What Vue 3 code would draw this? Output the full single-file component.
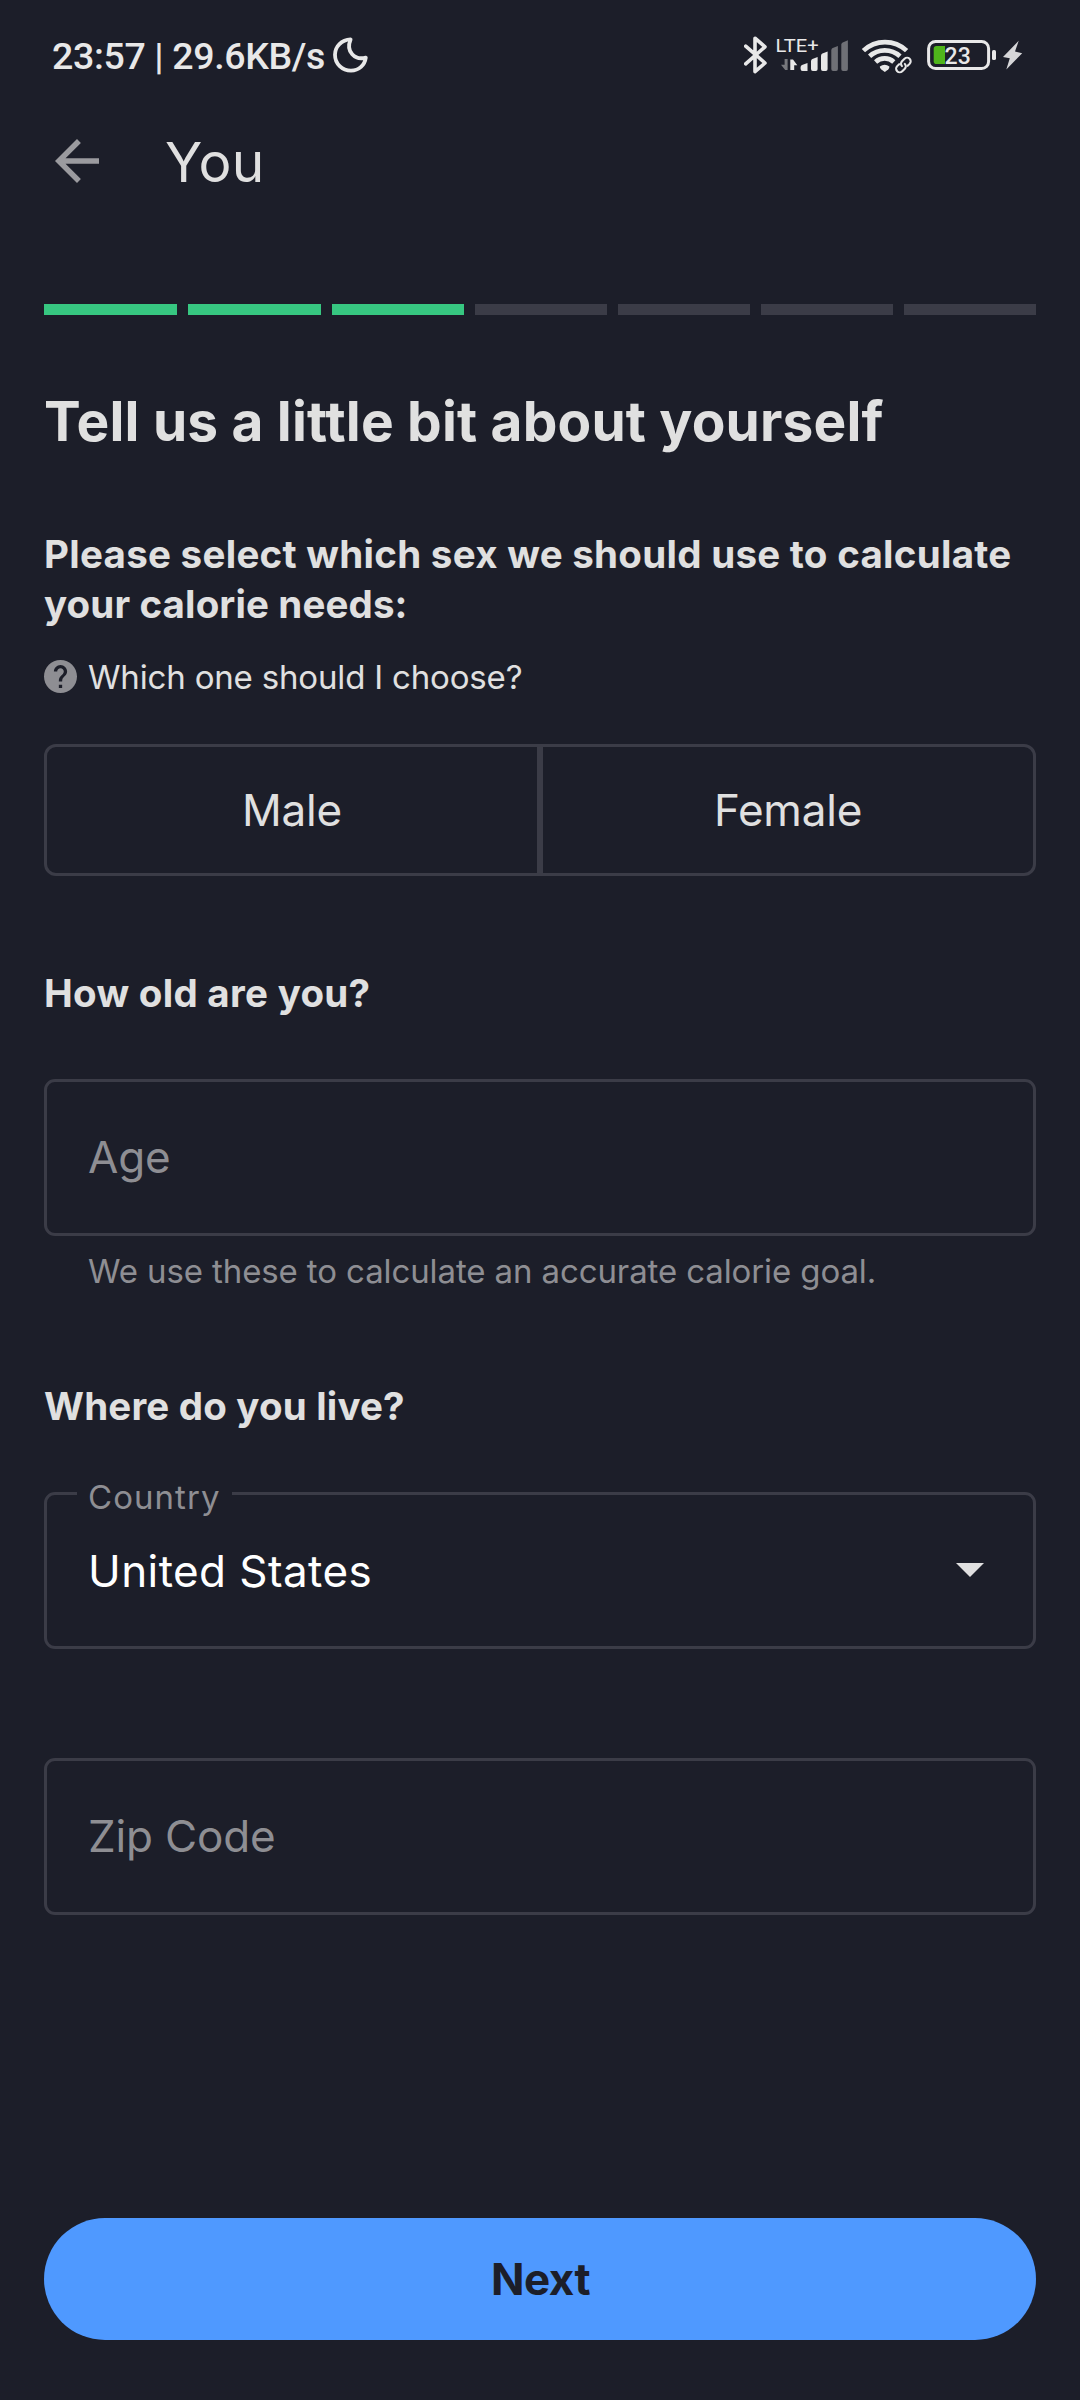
<script setup>
import { ref } from 'vue'

const steps = 7
const completed = 3
const sexes = ['Male', 'Female']
const country = ref('United States')
</script>

<template>
  <main class="screen">
    <header class="status">
      <div class="status-left">
        <span class="clock">23:57 | 29.6KB/s</span>
        <svg class="moon" width="36" height="38" viewBox="0 0 36 38">
          <path
            d="M17.6 2.4C8.6 2.8 2 9.4 2 17.8C2 27 9.2 33.6 18 33.6C26 33.6 31.8 28.2 32.8 20.6C22 23.6 12.4 14.6 17.6 2.4Z"
            fill="none" stroke="#e8e8e8" stroke-width="3.8" stroke-linejoin="round"
          />
        </svg>
      </div>
      <div class="status-right">
        <svg class="bluetooth" width="24" height="40" viewBox="744 36 24 40">
          <path
            d="M745.7 46.2L765 63L755 71.6V38.2L765 46.8L745.7 63.8"
            fill="none" stroke="#e8e8e8" stroke-width="3.6" stroke-linejoin="round" stroke-linecap="round"
          />
        </svg>
        <svg class="signal" width="76" height="56" viewBox="772 28 76 56">
          <text x="775.6" y="52" class="lte" textLength="43" lengthAdjust="spacingAndGlyphs">LTE+</text>
          <path d="M787.6 59V70H785.2L781 64.8H784.6V59Z" fill="#77787d" />
          <path d="M790.3 59.5H793L797.3 65.2H794.2V70H790.3Z" fill="#e8e8e8" />
          <g fill="#e8e8e8">
            <path d="M800.6 69V67Q800.8 65.6 802 65L807.5 63V71H802.5Q800.6 71 800.6 69Z" />
            <path d="M811 69V61Q811.2 59.6 812.4 59L817.6 57V69Q817.6 71 815.8 71H812.8Q811 71 811 69Z" />
            <path d="M821 69V55.5Q821.2 54 822.4 53.4L827.6 51.4V69Q827.6 71 825.8 71H822.8Q821 71 821 69Z" />
          </g>
          <g fill="#6f7076">
            <path d="M831.3 69V50Q831.5 48.5 832.7 47.9L837.9 45.9V69Q837.9 71 836.1 71H833.1Q831.3 71 831.3 69Z" />
            <path d="M841.3 69V44.6Q841.5 43 842.7 42.4L847.9 40.3V69Q847.9 71 846.1 71H843.1Q841.3 71 841.3 69Z" />
          </g>
        </svg>
        <svg class="wifi" width="51" height="40" viewBox="861 36 51 40">
          <g fill="none" stroke="#e8e8e8" stroke-width="4.7">
            <path d="M863.4 50.6A31.5 31.5 0 0 1 906.6 50.6" />
            <path d="M869.6 56.2A22.5 22.5 0 0 1 900 56.2" />
            <path d="M875.6 61.9A13.5 13.5 0 0 1 893.8 61.9" />
          </g>
          <path d="M879.8 66.4Q884.8 63 889.4 66.4Q889.6 68 888.2 69.4L884.8 72L881.4 69.4Q879.6 68 879.8 66.4Z" fill="#e8e8e8" />
          <g transform="translate(903.4 65) rotate(-45)">
            <rect x="-10.5" y="-5.6" width="21" height="11.2" rx="5.6" fill="#1c1e29" />
            <g fill="none" stroke="#e8e8e8" stroke-width="2.1" stroke-linecap="round">
              <path d="M-2.4 -3.6H-5.2A3.6 3.6 0 0 0 -5.2 3.6H-1.6A3.4 3.4 0 0 0 1.8 0.2" />
              <path d="M2.4 3.6H5.2A3.6 3.6 0 0 0 5.2 -3.6H1.6A3.4 3.4 0 0 0 -1.8 -0.2" />
            </g>
          </g>
        </svg>
        <svg class="battery" width="70" height="40" viewBox="926 36 70 40">
          <rect x="928.6" y="41.5" width="60" height="27" rx="7" fill="none" stroke="#e8e8e8" stroke-width="3" />
          <path d="M936.5 46H945V64H936.5Q933.7 64 933.7 61.2V48.8Q933.7 46 936.5 46Z" fill="#4fb51b" />
          <rect x="992" y="50" width="4" height="10" rx="1.6" fill="#e8e8e8" />
          <text x="944.6" y="63.8" class="level">23</text>
        </svg>
        <svg class="bolt" width="20" height="40" viewBox="1003 36 20 40">
          <path d="M1018.7 40.7L1003 57L1009.8 58.2L1006.3 69.5L1022.2 53.2L1015 51.6Z" fill="#d6d6d8" />
        </svg>
      </div>
    </header>

    <nav class="appbar">
      <svg class="back" width="66" height="66" viewBox="0 0 24 24">
        <path d="M20 11H7.83l5.59-5.59L12 4l-8 8 8 8 1.41-1.41L7.83 13H20v-2z" fill="#9b9b9f" />
      </svg>
      <h1>You</h1>
    </nav>

    <div class="progress">
      <span v-for="n in steps" :key="n" :class="{ done: n <= completed }" />
    </div>

    <h2>Tell us a little bit about yourself</h2>

    <section>
      <h3 class="sex-question">Please select which sex we should use to calculate<br /><span>your calorie needs:</span></h3>
      <div class="hint">
        <svg width="33" height="33" viewBox="2 2 20 20">
          <path
            d="M12 2C6.48 2 2 6.48 2 12s4.48 10 10 10 10-4.48 10-10S17.52 2 12 2zm1 17h-2v-2h2v2zm2.07-7.75l-.9.92C13.45 12.9 13 13.5 13 15h-2v-.5c0-1.1.45-2.1 1.17-2.83l1.24-1.26c.37-.36.59-.86.59-1.41 0-1.1-.9-2-2-2s-2 .9-2 2H8c0-2.21 1.79-4 4-4s4 1.79 4 4c0 .88-.36 1.68-.93 2.25z"
            fill="#8e8e93"
          />
        </svg>
        <span>Which one should I choose?</span>
      </div>
      <div class="toggle">
        <button v-for="s in sexes" :key="s" type="button">{{ s }}</button>
      </div>
    </section>

    <section>
      <h3 class="age-question">How old are you?</h3>
      <div class="field placeholder">Age</div>
      <p class="helper">We use these to calculate an accurate calorie goal.</p>
    </section>

    <section>
      <h3 class="live-question">Where do you live?</h3>
      <div class="field country">
        <span class="label">Country</span>
        <span class="value">{{ country }}</span>
        <svg width="28" height="14" viewBox="0 0 28 14"><path d="M0 0H28L14 14Z" fill="#e0e0e0" /></svg>
      </div>
      <div class="field placeholder zip">Zip Code</div>
    </section>

    <button class="next" type="button">Next</button>
  </main>
</template>

<style>
body {
  margin: 0;
  background: #1c1e29;
}
</style>

<style scoped>
.screen {
  width: 1080px;
  height: 2400px;
  box-sizing: border-box;
  padding: 0 44px;
  display: flex;
  flex-direction: column;
  overflow: hidden;
  background: #1c1e29;
  color: #e0e0e0;
  font-family: Inter, "Liberation Sans", sans-serif;
  font-variant-ligatures: none;
}
h1, h2, h3, p { margin: 0; }
button {
  margin: 0;
  padding: 0;
  border: 0;
  background: none;
  color: inherit;
  font: inherit;
}
svg { display: block; flex: none; }

.status {
  height: 112px;
  display: flex;
  justify-content: space-between;
  align-items: center;
  margin: 0 13px 0 8px;
}
.status-left, .status-right { display: flex; align-items: center; }
.clock {
  width: 281px;
  white-space: nowrap;
  font: 500 37.5px/44px Roboto, sans-serif;
  letter-spacing: -0.36px;
  color: #e8e8e8;
}
.signal { margin-left: 4px; }
.wifi { margin-left: 13px; }
.battery { margin-left: 14px; }
.bolt { margin-left: 7px; }
.lte { font: 400 19px Roboto, sans-serif; fill: #e8e8e8; }
.level { font: 500 23px Roboto, sans-serif; fill: #e8e8e8; }

.appbar { height: 98px; display: flex; align-items: center; }
.appbar h1 {
  margin: 2px 0 0 55px;
  font-size: 55px;
  line-height: 66px;
  font-weight: 400;
  letter-spacing: 0.35px;
}

.progress {
  display: grid;
  grid-template-columns: 133px 133px repeat(5, 132px);
  gap: 11px;
  height: 11px;
  margin-top: 94px;
  flex: none;
}
.progress span { background: #3b3c47; }
.progress .done { background: #37c781; }

h2 {
  margin: 73px 0 0;
  font-size: 55px;
  line-height: 66px;
  font-weight: 700;
  letter-spacing: 0.18px;
  font-feature-settings: "calt" 0, "liga" 0, "dlig" 0;
  white-space: nowrap;
}
h3 {
  font-size: 38.5px;
  line-height: 50px;
  font-weight: 700;
  letter-spacing: 0.28px;
  white-space: nowrap;
}
.sex-question { margin: 75px 0 0; }
.sex-question span { letter-spacing: 0.12px; }
.hint {
  display: flex;
  align-items: center;
  gap: 11px;
  height: 40px;
  margin-top: 28px;
  font-size: 33px;
  letter-spacing: -0.17px;
}
.hint svg { margin-bottom: 1px; }
.toggle {
  box-sizing: border-box;
  height: 132px;
  margin-top: 47px;
  display: flex;
  border: 3px solid #3b3c47;
  border-radius: 12px;
}
.toggle button { flex: 1; font-size: 44px; letter-spacing: -0.2px; }
.toggle button + button { border-left: 6px solid #3b3c47; }

.age-question { margin: 92px 0 61px; letter-spacing: 0.28px; }
.field {
  box-sizing: border-box;
  height: 157px;
  display: flex;
  align-items: center;
  padding: 0 49px 0 41px;
  border: 3px solid #3b3c47;
  border-radius: 11px;
  font-size: 44px;
}
.placeholder { padding-bottom: 2px; color: #8e8e93; letter-spacing: -0.16px; }
.helper {
  margin: 15px 0 0 44px;
  font-size: 33px;
  line-height: 40px;
  letter-spacing: -0.11px;
  color: #8e8e93;
}
.live-question { margin: 90px 0 61px; letter-spacing: 0.18px; }
.country { position: relative; justify-content: space-between; color: #fff; }
.country svg { margin-bottom: 1px; }
.value { letter-spacing: 0.42px; }
.label {
  position: absolute;
  left: 30px;
  top: -18px;
  width: 144px;
  padding-left: 11px;
  background: #1c1e29;
  font-size: 33px;
  line-height: 40px;
  letter-spacing: 1.05px;
  color: #8e8e93;
}
.zip { margin-top: 109px; }
.next {
  height: 122px;
  margin-top: 303px;
  flex: none;
  border-radius: 61px;
  background: #4f99ff;
  color: #1c1e29;
  font-size: 44px;
  font-weight: 700;
  letter-spacing: -0.5px;
  text-indent: 1px;
}
</style>
